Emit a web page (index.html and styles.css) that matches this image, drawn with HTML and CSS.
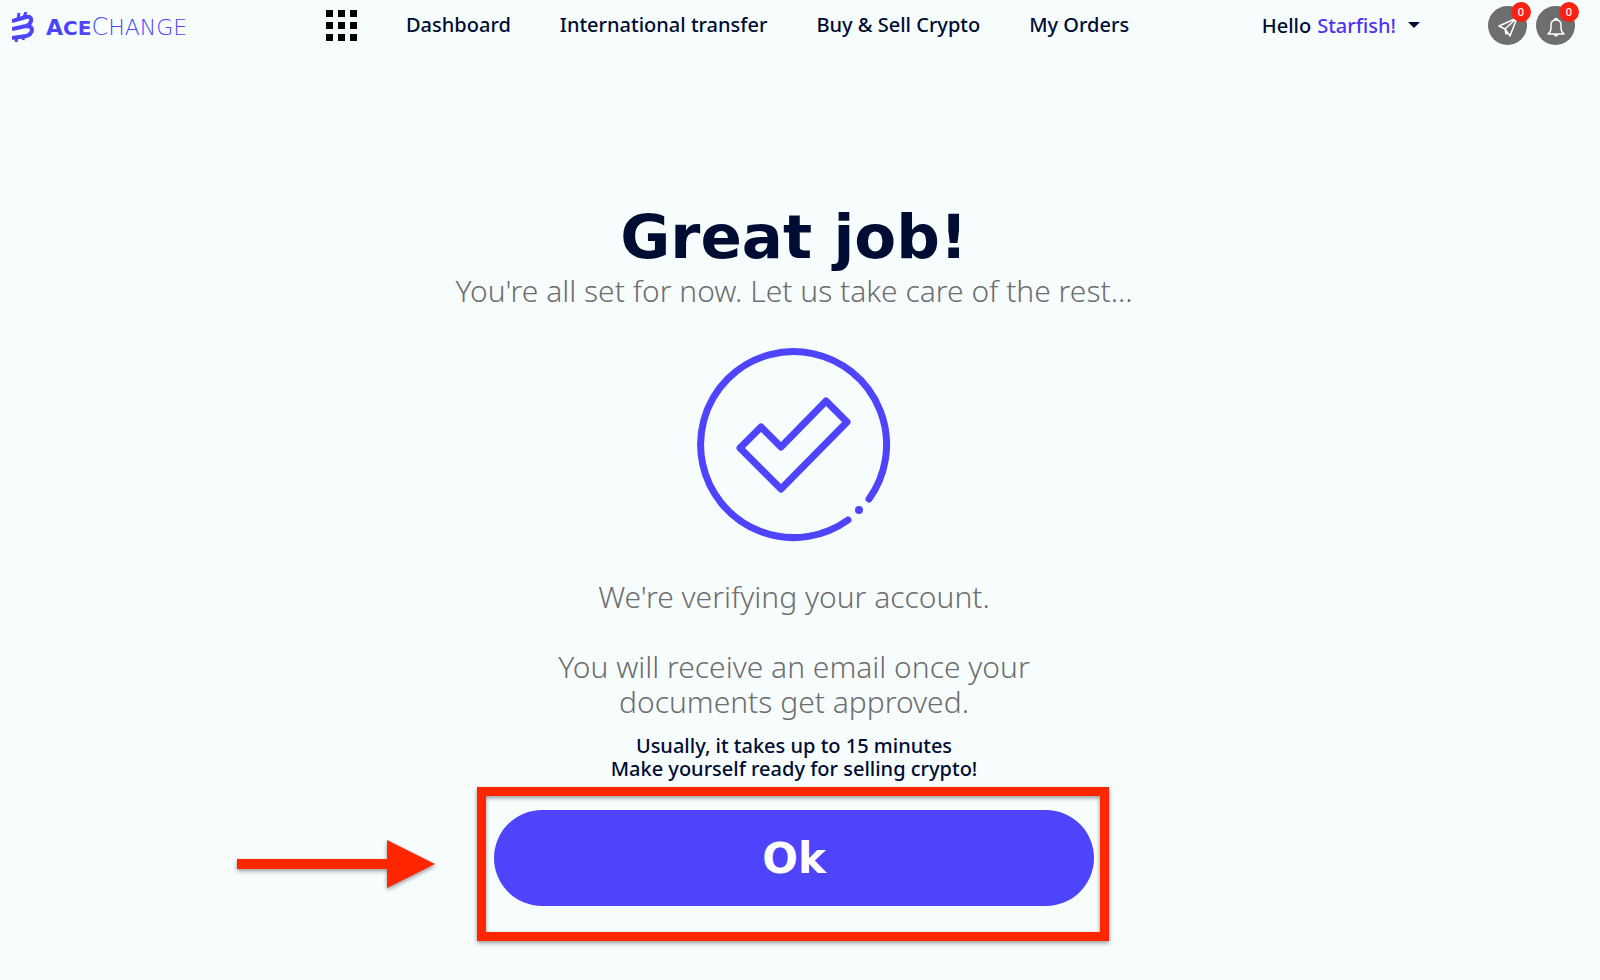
FILE: index.html
```html
<!DOCTYPE html>
<html lang="en">
<head>
    <meta charset="UTF-8">
    <meta name="viewport" content="width=device-width, initial-scale=1.0">
    <title>AceChange</title>
    <link rel="stylesheet" href="styles.css">
</head>
<body>
    <header class="topbar">
        <a class="logo" href="#">
            <svg class="logo-mark" viewBox="0 0 22 30" aria-hidden="true">
                <path d="M0 9 L14 5 Q20 4 19 9 Q18 13 14 14 L0 17 M14 14 Q20 14 20 18 Q19 23 14 24 L0 26" fill="none" stroke="#4e44fb" stroke-width="4"/>
                <path d="M6 7 L7 1 M12 5 L14 0 M4 30 L5 25 M11 28 L12 23" stroke="#4e44fb" stroke-width="3"/>
            </svg>
            <span class="logo-text"><b>A<small>CE</small></b>C<small>HANGE</small></span>
        </a>

        <nav class="menu">
            <button class="apps" type="button" aria-label="Apps">
                <svg viewBox="0 0 31 31">
                    <path d="M0 0h7v7H0zM12 0h7v7h-7zM24 0h7v7h-7zM0 12h7v7H0zM12 12h7v7h-7zM24 12h7v7h-7zM0 24h7v7H0zM12 24h7v7h-7zM24 24h7v7h-7z"/>
                </svg>
            </button>
            <a href="#">Dashboard</a>
            <a href="#">International transfer</a>
            <a href="#">Buy &amp; Sell Crypto</a>
            <a href="#">My Orders</a>
        </nav>

        <button class="user" type="button">Hello <span class="user-name">Starfish!</span><span class="caret"></span></button>

        <div class="alerts">
            <button class="alert" type="button" aria-label="Messages">
                <svg viewBox="0 0 20 20">
                    <path d="M19 1 L1 9 L7 12 L12 19 Z M19 1 L7 12 L8 17 L10 15"/>
                </svg>
                <span class="badge">0</span>
            </button>
            <button class="alert" type="button" aria-label="Notifications">
                <svg viewBox="0 0 20 20">
                    <path d="M2 17 H18 Q15 15 15 11 V8 Q15 3 10 3 Q5 3 5 8 V11 Q5 15 2 17 Z M8 17 Q10 21 12 17 M8 3 Q10 0 12 3"/>
                </svg>
                <span class="badge">0</span>
            </button>
        </div>
    </header>

    <main class="content">
        <h1>Great job!</h1>
        <p class="lead">You're all set for now. Let us take care of the rest...</p>

        <svg class="done" viewBox="0 0 194 194" aria-hidden="true">
            <path d="M172 151 A93 93 0 1 0 151 172"/>
            <path d="M43 100 L64 79 L84 99 L129 53 L150 74 L84 141 Z"/>
            <circle cx="162" cy="162" r="4"/>
        </svg>

        <p class="lead">We're verifying your account.</p>
        <p class="lead mail">You will receive an email once your documents get approved.</p>
        <p class="note">Usually, it takes up to 15 minutes<br>Make yourself ready for selling crypto!</p>

        <div class="action">
            <button class="ok" type="button">Ok</button>
            <div class="frame"></div>
            <svg class="arrow" viewBox="0 0 198 50" aria-hidden="true">
                <path d="M0 20 H150 V1 L198 25 L150 49 V30 H0 Z"/>
            </svg>
        </div>
    </main>
</body>
</html>
```
FILE: styles.css
```css
* {
    box-sizing: border-box;
}

body {
    margin: 0;
    min-height: 100vh;
    background-color: #f7fcfd;
    color: #000c32;
    font-family: "Noto Sans", sans-serif;
    font-size: 20px;
    font-weight: 500;
}

a {
    color: inherit;
    text-decoration: none;
}

button {
    padding: 0;
    border: none;
    background: none;
    color: inherit;
    font: inherit;
    cursor: pointer;
}

/* top bar */
.topbar {
    display: flex;
    align-items: center;
    height: 50px;
    padding: 0 25px 0 12px;
}

.logo {
    display: flex;
    align-items: center;
    gap: 12px;
    width: 314px;
    padding-top: 4px;
    color: #4e44fb;
}

.logo-mark {
    width: 22px;
    height: 30px;
}

.logo-text {
    font-family: "DejaVu Sans", sans-serif;
    font-size: 24px;
    font-weight: 200;
    line-height: 30px;
}

.logo-text b {
    font-size: 22px;
    font-weight: 700;
}

.logo-text small {
    font-size: 22px;
}

.logo-text b small {
    font-size: 20px;
}

.menu {
    display: flex;
    align-items: center;
    gap: 49px;
    flex: 1;
}

.menu a {
    padding-bottom: 2px;
}

.apps svg {
    display: block;
    width: 31px;
    height: 31px;
}

.user {
    display: flex;
    align-items: center;
    gap: 6px;
    margin-right: 68px;
}

.user-name {
    color: #4e34f0;
}

.caret {
    margin-left: 6px;
    border: 6px solid transparent;
    border-top-color: #000c32;
    border-bottom: none;
}

.alerts {
    display: flex;
    gap: 9px;
}

.alert {
    position: relative;
    width: 39px;
    height: 39px;
    border-radius: 50%;
    background-color: #6e6e6e;
}

.alert svg {
    display: block;
    width: 20px;
    height: 20px;
    margin: 3px auto 0;
    fill: none;
    stroke: #fff;
    stroke-width: 1.5;
    stroke-linejoin: round;
}

.badge {
    position: absolute;
    top: -4px;
    right: -4px;
    width: 20px;
    height: 20px;
    border-radius: 50%;
    background-color: #f92314;
    color: #fff;
    font-size: 11px;
    line-height: 20px;
}

/* confirmation */
.content {
    max-width: 100%;
    padding: 151px 12px 0 0;
    text-align: center;
}

h1 {
    margin: 0;
    font-family: "DejaVu Sans", sans-serif;
    font-size: 61px;
    font-weight: 700;
    line-height: 72px;
}

.lead {
    margin: 0;
    color: #6e6e6e;
    font-size: 30px;
    font-weight: 300;
    line-height: 35px;
}

.done {
    display: block;
    width: 194px;
    height: 194px;
    margin: 40px auto 37px;
    fill: none;
    stroke: #4e44fb;
    stroke-width: 7;
    stroke-linecap: round;
    stroke-linejoin: round;
}

.done circle {
    fill: #4e44fb;
    stroke: none;
}

.mail {
    max-width: 500px;
    margin: 35px auto 15px;
}

.note {
    margin: 0;
    line-height: 23px;
}

.action {
    position: relative;
    max-width: 600px;
    margin: 30px auto 0;
}

.ok {
    width: 100%;
    height: 96px;
    border-radius: 48px;
    background-color: #4e44fb;
    color: #fff;
    font-family: "DejaVu Sans", sans-serif;
    font-size: 42px;
    font-weight: 700;
}

/* highlight round the button */
.frame {
    position: absolute;
    inset: -23px -15px -35px -17px;
    border: 9px solid #ff2600;
    filter: drop-shadow(0 2px 2px rgba(0, 0, 0, 0.4));
    pointer-events: none;
}

.arrow {
    position: absolute;
    top: 29px;
    right: calc(100% + 59px);
    width: 198px;
    height: 50px;
    fill: #ff2600;
    filter: drop-shadow(0 2px 2px rgba(0, 0, 0, 0.4));
}
```
